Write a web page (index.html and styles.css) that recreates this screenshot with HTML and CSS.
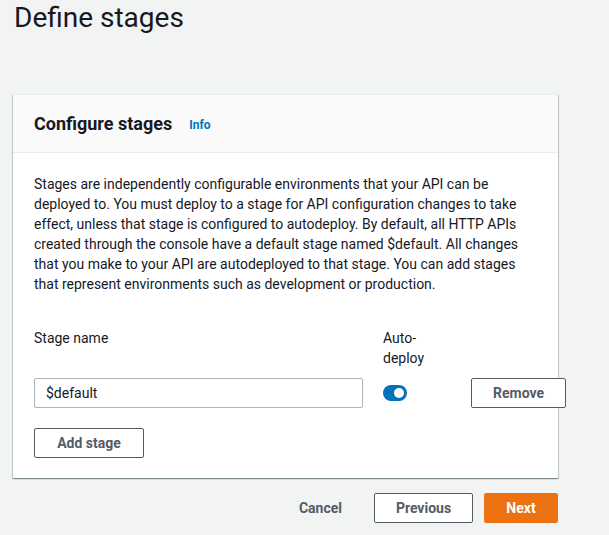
FILE: index.html
```html
<!DOCTYPE html>
<html>
<head>
<meta charset="utf-8">
<link rel="stylesheet" href="styles.css">
</head>
<body>
<div class="page">
  <h1 class="title">Define stages</h1>
  <div class="card">
    <div class="card-header">
      <h2 class="card-title">Configure stages</h2>
      <a class="info">Info</a>
    </div>
    <div class="card-body">
      <p class="desc">Stages are independently configurable environments that your API can be deployed to. You must deploy to a stage for API configuration changes to take effect, unless that stage is configured to autodeploy. By default, all HTTP APIs created through the console have a default stage named $default. All changes that you make to your API are autodeployed to that stage. You can add stages that represent environments such as development or production.</p>
      <div class="stage-grid">
        <div class="label">Stage name</div>
        <div class="label">Auto-deploy</div>
        <div></div>
        <div class="input">$default</div>
        <div class="toggle-cell"><span class="toggle"><span class="knob"></span></span></div>
        <button class="btn">Remove</button>
      </div>
      <button class="btn add">Add stage</button>
    </div>
  </div>
  <div class="footer">
    <button class="btn link">Cancel</button>
    <button class="btn prev">Previous</button>
    <button class="btn primary">Next</button>
  </div>
</div>
</body>
</html>
```
FILE: styles.css
```css
* { box-sizing: border-box; }
html, body { margin: 0; padding: 0; }
body {
  background: #f2f3f3;
  font-family: Roboto, "Liberation Sans", sans-serif;
  font-size: 14px;
  line-height: 20px;
  color: #16191f;
}
.page {
  width: 558px;
  padding-left: 13px;
}
.title {
  margin: 0;
  padding: 0 0 0 1px;
  font-size: 28px;
  line-height: 36px;
  font-weight: 400;
  color: #16191f;
}
.card {
  margin-top: 58px;
  background: #fff;
  border-top: 1px solid #eaeded;
  box-shadow: 0 1px 1px 0 rgba(0,28,36,.3), 1px 1px 1px 0 rgba(0,28,36,.15), -1px 1px 1px 0 rgba(0,28,36,.15);
}
.card-header {
  background: #fafafa;
  border-bottom: 1px solid #eaeded;
  height: 58px;
  padding: 0 20px 0 21px;
  display: flex;
  align-items: center;
  gap: 17px;
}
.card-title {
  margin: 0;
  font-size: 18px;
  font-weight: 700;
  line-height: 22px;
}
.info {
  font-size: 12px;
  font-weight: 700;
  color: #0073bb;
  margin-top: 3px;
}
.card-body {
  padding: 21px 20px 20px 21px;
}
.desc {
  margin: 0 0 34px;
}
.stage-grid {
  display: grid;
  grid-template-columns: 329px 68px 95px;
  column-gap: 20px;
  row-gap: 10px;
  align-items: start;
}
.label {
  line-height: 20px;
}
.input {
  height: 30px;
  border: 1px solid #aab7b8;
  border-radius: 2px;
  padding: 4px 11px;
  line-height: 20px;
  color: #16191f;
}
.toggle-cell {
  height: 30px;
  display: flex;
  align-items: center;
}
.toggle {
  width: 24px;
  height: 16px;
  border-radius: 8px;
  background: #0073bb;
  position: relative;
  display: inline-block;
}
.knob {
  position: absolute;
  right: 3px;
  top: 3px;
  width: 10px;
  height: 10px;
  border-radius: 50%;
  background: #fff;
}
.btn {
  height: 30px;
  font-family: inherit;
  font-size: 14px;
  font-weight: 700;
  color: #545b64;
  background: #fff;
  border: 1px solid #545b64;
  border-radius: 2px;
  padding: 0 20px;
  line-height: 28px;
}
.add {
  margin-top: 20px;
  width: 110px;
}
.footer {
  margin-top: 15px;
  display: flex;
  justify-content: flex-end;
  gap: 11px;
}
.prev { width: 99px; }
.link {
  background: transparent;
  border-color: transparent;
}
.primary {
  background: #ec7211;
  border-color: #ec7211;
  color: #fff;
  width: 74px;
}
```
